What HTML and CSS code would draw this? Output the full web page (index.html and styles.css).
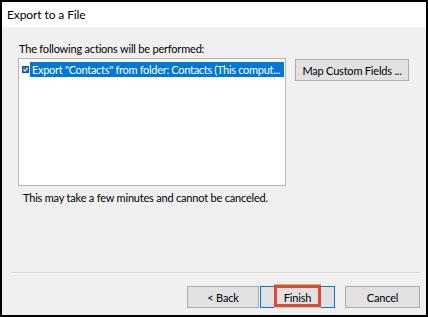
FILE: index.html
```html
<!DOCTYPE html>
<html>
<head>
<meta charset="utf-8">
<link rel="stylesheet" href="styles.css">
</head>
<body>
<div class="window">
  <div class="title">Export to a File</div>
  <div class="content">
    <div class="label">The following actions will be performed:</div>
    <div class="row">
      <div class="list">
        <div class="item">
          <span class="check"><svg width="7" height="7" viewBox="0 0 7 7"><rect x="0.5" y="0.5" width="6" height="6" fill="#2a6fc4" stroke="#1b4f99"/><path d="M1.5 3.6 L2.9 5 L5.6 1.9" fill="none" stroke="#fff" stroke-width="1.1"/></svg></span>
          <span class="sel">Export "Contacts" from folder: Contacts (This comput...</span>
        </div>
      </div>
      <button class="btn map">Map Custom Fields ...</button>
    </div>
    <div class="note">This may take a few minutes and cannot be canceled.</div>
  </div>
  <div class="sep"></div>
  <div class="footer">
    <button class="btn back">&lt; Back</button>
    <div class="finish-wrap">
      <button class="btn finish">Finish</button>
      <span class="mark"></span>
    </div>
    <button class="btn cancel">Cancel</button>
  </div>
</div>
</body>
</html>
```

FILE: styles.css
```css
html, body {
  margin: 0;
  padding: 0;
}
body {
  width: 428px;
  height: 317px;
  background: #000;
  font-family: Lato, "Noto Sans", sans-serif;
  font-size: 11px;
  letter-spacing: -0.2px;
  color: #000;
}
.window {
  box-sizing: border-box;
  width: 428px;
  height: 317px;
  border: 2px solid #000;
  background: #f0f0f0;
  display: flex;
  flex-direction: column;
}
.title {
  height: 25px;
  background: #fff;
  padding-left: 5px;
  line-height: 25px;
  font-size: 12px;
  letter-spacing: -0.1px;
}
.content {
  padding: 14px 0 0 16px;
}
.label {
  padding-left: 1px;
  line-height: 15px;
}
.row {
  display: flex;
  align-items: flex-start;
  margin-top: 2px;
}
.list {
  box-sizing: border-box;
  width: 268px;
  height: 128px;
  background: #fff;
  border: 1px solid #b4b4b4;
  padding: 3px 1px 0 3px;
}
.item {
  display: flex;
  align-items: center;
  height: 15px;
}
.check {
  display: flex;
  width: 8px;
}
.sel {
  flex: 1;
  min-width: 0;
  background: #0078d7;
  color: #fff;
  height: 15px;
  line-height: 15px;
  padding-left: 2px;
  letter-spacing: -0.3px;
  white-space: nowrap;
  overflow: hidden;
}
.btn {
  box-sizing: border-box;
  font-family: inherit;
  font-size: inherit;
  letter-spacing: inherit;
  color: #000;
  background: #e1e1e1;
  border: 1px solid #adadad;
  padding: 0;
  margin: 0;
  height: 22px;
  white-space: nowrap;
}
.map {
  width: 114px;
  margin-left: 9px;
  margin-top: 1px;
}
.note {
  margin-top: 4px;
  padding-left: 5px;
  line-height: 15px;
}
.sep {
  margin: auto 6px 0 9px;
  border-top: 1px solid #d5d5d5;
  border-bottom: 1px solid #fff;
}
.footer {
  display: flex;
  align-items: center;
  padding: 12px 6px 7px 185px;
}
.back {
  width: 72px;
}
.finish-wrap {
  position: relative;
  margin-left: 1px;
}
.finish {
  width: 75px;
  border-color: #0078d7;
}
.mark {
  position: absolute;
  left: 14px;
  top: -1px;
  width: 47px;
  height: 22px;
  box-sizing: border-box;
  border: 3px solid #e5463c;
  box-shadow: 0 -1px 0 #9ccf6c, 0 1px 0 #b9dc93;
}
.cancel {
  width: 75px;
  margin-left: 10px;
}
```
